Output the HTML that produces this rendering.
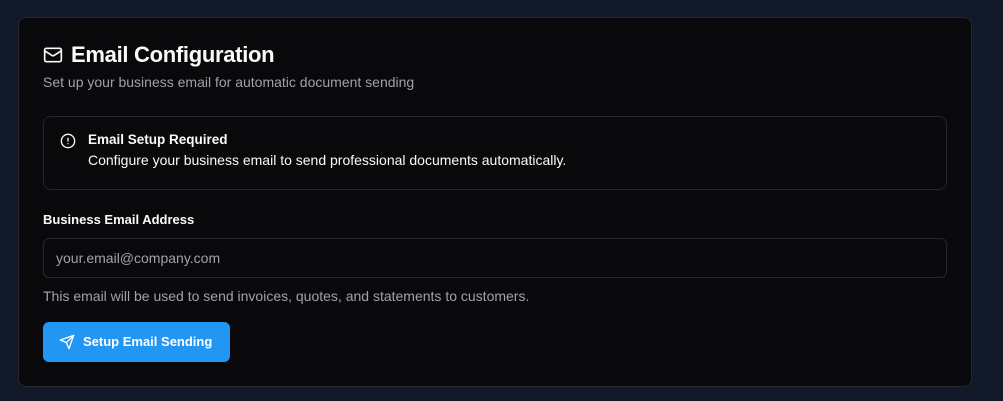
<!DOCTYPE html>
<html><head><style>
*{box-sizing:border-box;margin:0;padding:0}
body{width:1003px;height:401px;background:#111827;font-family:"Liberation Sans",sans-serif;color:#fafafa;position:relative;overflow:hidden}
.card{position:absolute;left:18px;top:17px;width:954px;height:370px;background:#09090b;border:1px solid #27272a;border-radius:8px}
.abs{position:absolute}
</style></head><body>
<div class="card">
<svg class="abs" style="left:24px;top:27px" width="20" height="20" viewBox="0 0 24 24" fill="none" stroke="#fafafa" stroke-width="2" stroke-linecap="round" stroke-linejoin="round"><rect x="2" y="4" width="20" height="16" rx="2"/><path d="m22 7-8.97 5.7a1.94 1.94 0 0 1-2.06 0L2 7"/></svg>
<div class="abs" style="left:52px;top:24px;font-size:22px;font-weight:bold;letter-spacing:-0.3px">Email Configuration</div>
<div class="abs" style="left:24px;top:56px;font-size:14px;color:#a1a1aa">Set up your business email for automatic document sending</div>
<div class="abs" style="left:24px;top:98px;width:904px;height:74px;border:1px solid #27272a;border-radius:8px">
<svg class="abs" style="left:16px;top:16px" width="16" height="16" viewBox="0 0 24 24" fill="none" stroke="#fafafa" stroke-width="2" stroke-linecap="round"><circle cx="12" cy="12" r="10"/><path d="M12 8v4M12 16h.01"/></svg>
<div class="abs" style="left:44px;top:15px;font-size:13.5px;font-weight:bold">Email Setup Required</div>
<div class="abs" style="left:44px;top:35px;font-size:14px">Configure your business email to send professional documents automatically.</div>
</div>
<div class="abs" style="left:24px;top:194px;font-size:13px;font-weight:bold">Business Email Address</div>
<div class="abs" style="left:24px;top:220px;width:904px;height:40px;border:1px solid #27272a;border-radius:6px">
<div class="abs" style="left:12px;top:11px;font-size:14px;color:#a1a1aa">your.email@company.com</div></div>
<div class="abs" style="left:24px;top:270px;font-size:14px;color:#a1a1aa">This email will be used to send invoices, quotes, and statements to customers.</div>
<div class="abs" style="left:24px;top:304px;width:187px;height:40px;background:#2196f3;border-radius:6px">
<svg class="abs" style="left:16px;top:12px" width="16" height="16" viewBox="0 0 24 24" fill="none" stroke="#fff" stroke-width="2" stroke-linecap="round" stroke-linejoin="round"><path d="m22 2-7 20-4-9-9-4Z"/><path d="M22 2 11 13"/></svg>
<div class="abs" style="left:40px;top:12px;font-size:13px;font-weight:bold;color:#fff">Setup Email Sending</div></div>
</div>
</body></html>
